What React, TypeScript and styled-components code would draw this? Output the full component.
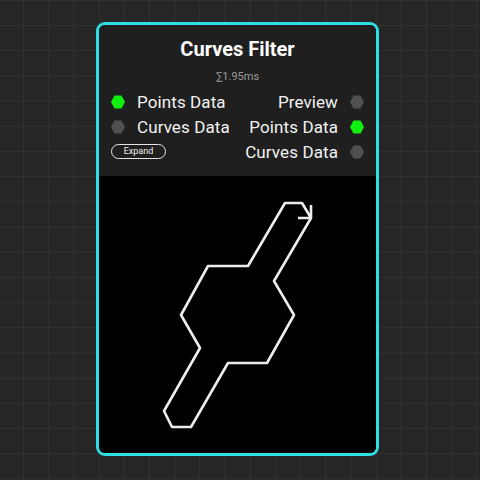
import React from 'react';
import styled, { createGlobalStyle } from 'styled-components';

const GlobalStyle = createGlobalStyle`
  html, body {
    margin: 0;
    padding: 0;
    background: #262626;
  }
  * {
    box-sizing: border-box;
  }
`;

const Canvas = styled.div`
  width: 480px;
  height: 480px;
  padding: 22px 0 0 96px;
  background-color: #262626;
  background-image:
    linear-gradient(to right, #323232 1px, transparent 1px),
    linear-gradient(to bottom, #323232 1px, transparent 1px);
  background-size: 25.2px 25.2px;
  background-position: 23px 25px;
  font-family: Roboto, 'Liberation Sans', sans-serif;
`;

const Node = styled.div`
  width: 283px;
  height: 434px;
  border: 3px solid #2ee0e3;
  border-radius: 9px;
  overflow: hidden;
  display: flex;
  flex-direction: column;
  background: #000;
`;

const Header = styled.div`
  background: #1f1f1f;
  height: 151px;
  padding: 11px 12px 0;
  display: flex;
  flex-direction: column;
`;

const Title = styled.div`
  color: #fff;
  font-size: 20px;
  font-weight: 700;
  line-height: 26px;
  text-align: center;
`;

const Timing = styled.div`
  color: #9a9a9a;
  font-size: 11px;
  line-height: 14px;
  text-align: center;
  margin-top: 8px;
`;

const Sockets = styled.div`
  display: grid;
  grid-template-columns: 1fr 1fr;
  grid-auto-rows: 25px;
  margin-top: 5px;
`;

const Socket = styled.div<{ $side: 'in' | 'out' }>`
  display: flex;
  align-items: center;
  justify-content: ${p => (p.$side === 'in' ? 'flex-start' : 'flex-end')};
  gap: 12px;
  color: #f2f2f2;
  font-size: 17px;
  letter-spacing: 0.1px;
  white-space: nowrap;
`;

const ExpandButton = styled.button`
  align-self: center;
  justify-self: start;
  height: 15px;
  width: 55px;
  padding: 0;
  border: 1.5px solid #e6e6e6;
  border-radius: 8px;
  background: transparent;
  color: #f0f0f0;
  font-family: Roboto, 'Liberation Sans', sans-serif;
  font-size: 9px;
  line-height: 11px;
`;

const Preview = styled.div`
  flex: 1;
  background: #000;
  display: flex;
`;

const Hex: React.FC<{ on: boolean }> = ({ on }) => (
  <svg width="14" height="14" viewBox="0 0 14 14">
    <polygon points="3.5,0.5 10.5,0.5 14,7 10.5,13.5 3.5,13.5 0,7" fill={on ? '#11ee11' : '#505050'} />
  </svg>
);

const In: React.FC<{ label: string; on?: boolean }> = ({ label, on = false }) => (
  <Socket $side="in">
    <Hex on={on} />
    <span>{label}</span>
  </Socket>
);

const Out: React.FC<{ label: string; on?: boolean }> = ({ label, on = false }) => (
  <Socket $side="out">
    <span>{label}</span>
    <Hex on={on} />
  </Socket>
);

const curve = [
  [212, 42], [175, 105], [195, 139], [168, 187], [129, 187], [92, 251],
  [73, 251], [65, 235], [101, 172], [82, 139], [109, 90], [149, 90],
  [186, 27], [203, 27], [212, 42],
];

const CurvePlot = () => (
  <svg width="277" height="277" viewBox="0 0 277 277">
    <polyline
      points={curve.map(p => p.join(',')).join(' ')}
      fill="none"
      stroke="#ededed"
      strokeWidth="2.6"
      strokeLinejoin="round"
    />
    <polyline points="199,42 212,42 212,29" fill="none" stroke="#ededed" strokeWidth="2.6" strokeLinejoin="round" />
  </svg>
);

export default function App() {
  return (
    <>
      <GlobalStyle />
      <Canvas>
        <Node>
          <Header>
            <Title>Curves Filter</Title>
            <Timing>∑1.95ms</Timing>
            <Sockets>
              <In label="Points Data" on />
              <Out label="Preview" />
              <In label="Curves Data" />
              <Out label="Points Data" on />
              <ExpandButton>Expand</ExpandButton>
              <Out label="Curves Data" />
            </Sockets>
          </Header>
          <Preview>
            <CurvePlot />
          </Preview>
        </Node>
      </Canvas>
    </>
  );
}
